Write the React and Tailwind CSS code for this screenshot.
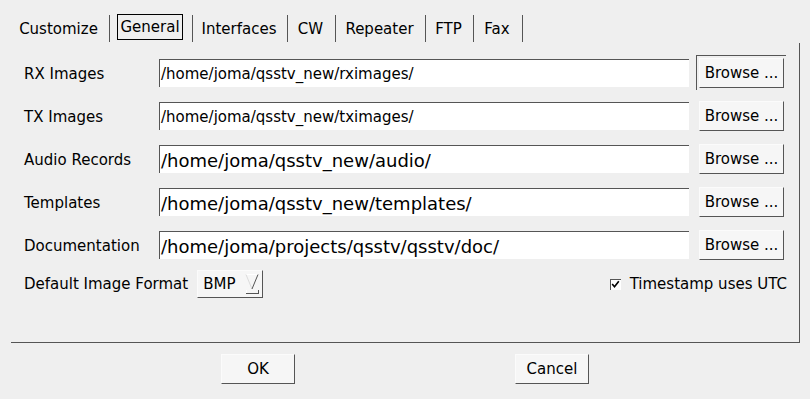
import React from "react";

const tabs = [
  { name: "Customize", w: "w-[100px]" },
  { name: "General", w: "w-[83px]", active: true },
  { name: "Interfaces", w: "w-[95px]" },
  { name: "CW", w: "w-[48px]" },
  { name: "Repeater", w: "w-[90px]" },
  { name: "FTP", w: "w-[48px]" },
  { name: "Fax", w: "w-[49px]" },
];

const rows = [
  { label: "RX Images", path: "/home/joma/qsstv_new/rximages/", size: "text-[15px]", focus: true },
  { label: "TX Images", path: "/home/joma/qsstv_new/tximages/", size: "text-[15px]" },
  { label: "Audio Records", path: "/home/joma/qsstv_new/audio/", size: "text-[18px]" },
  { label: "Templates", path: "/home/joma/qsstv_new/templates/", size: "text-[18px]" },
  { label: "Documentation", path: "/home/joma/projects/qsstv/qsstv/doc/", size: "text-[18px]" },
];

function Button({ children, className = "" }) {
  return (
    <button
      className={
        "flex items-center justify-center pt-px bg-[#f6f6f6] border-t border-l border-[#fbfbfb] border-r border-b border-r-[#555] border-b-[#555] text-[15px] text-black " +
        className
      }
    >
      {children}
    </button>
  );
}

export default function App() {
  return (
    <div
      className="w-[810px] h-[399px] bg-[#efefef] text-black text-[15px] overflow-hidden"
      style={{ fontFamily: '"DejaVu Sans", "Liberation Sans", sans-serif' }}
    >
      {/* tabs */}
      <div className="flex pl-[10px] pt-[15px] h-[43px]">
        {tabs.map((t) => (
          <div
            key={t.name}
            className={t.w + " h-[27px] border-r border-[#555] flex items-start justify-center pr-[2px]"}
          >
            {t.active ? (
              <div className="-mt-px h-[26px] px-[2px] pt-px border border-black flex items-center">{t.name}</div>
            ) : (
              <div className="h-[27px] pt-[2px] flex items-center">{t.name}</div>
            )}
          </div>
        ))}
      </div>

      {/* panel */}
      <div className="ml-[11px] w-[789px] h-[300px] border-r border-b border-[#555] pt-[16px] pl-[13px] pr-[12px] flex flex-col">
        <div className="flex flex-col gap-[15px] pr-px">
          {rows.map((r) => (
            <div key={r.label} className="flex items-center h-[28px]">
              <div className="w-[135px] pt-[2px]">{r.label}</div>
              <div
                className={
                  "w-[530px] h-[28px] bg-white border-t border-l border-[#555] pl-px pt-px flex items-center whitespace-nowrap " +
                  r.size
                }
              >
                {r.path}
              </div>
              <div className="relative ml-[10px]">
                {r.focus && (
                  <span className="absolute -left-[3px] -top-[3px] -right-[2px] -bottom-[2px] border-t border-l border-[#555]" />
                )}
                <Button className="relative w-[85px] h-[30px]">Browse ...</Button>
              </div>
            </div>
          ))}
        </div>

        <div className="flex items-center h-[28px] mt-[11px]">
          <div className="mr-[9px] pt-px">Default Image Format</div>
          <div className="w-[66px] h-[28px] bg-[#f6f6f6] border-t border-l border-[#fbfbfb] border-r border-b border-r-[#555] border-b-[#555] flex items-center pl-[5px]">
            <span className="pt-px">BMP</span>
            <svg className="ml-auto mr-[2px]" width="15" height="22" viewBox="0 0 15 22">
              <line x1="1" y1="1.5" x2="13" y2="1.5" stroke="#ffffff" strokeWidth="1" />
              <line x1="1" y1="1.5" x2="7" y2="16" stroke="#dcdcdc" strokeWidth="1" />
              <line x1="13" y1="1.5" x2="7" y2="16" stroke="#555" strokeWidth="1" />
              <line x1="1.5" y1="17" x2="1.5" y2="20" stroke="#ffffff" strokeWidth="1" />
              <line x1="1" y1="20.5" x2="14" y2="20.5" stroke="#555" strokeWidth="1" />
              <line x1="13.5" y1="17" x2="13.5" y2="21" stroke="#555" strokeWidth="1" />
            </svg>
          </div>
          <div className="ml-auto flex items-center gap-[9px]">
            <div className="w-[11px] h-[11px] bg-white border-t border-l border-[#555] flex items-center justify-center">
              <svg width="9" height="9" viewBox="0 0 9 9">
                <path d="M1.2 4 L3.5 6.8 L7.8 1.2" fill="none" stroke="#000" strokeWidth="1.6" />
              </svg>
            </div>
            <span className="pt-px">Timestamp uses UTC</span>
          </div>
        </div>
      </div>

      {/* bottom buttons */}
      <div className="flex mt-[11px] pl-[221px] gap-[220px]">
        <Button className="w-[74px] h-[30px]">OK</Button>
        <Button className="w-[74px] h-[30px]">Cancel</Button>
      </div>
    </div>
  );
}
